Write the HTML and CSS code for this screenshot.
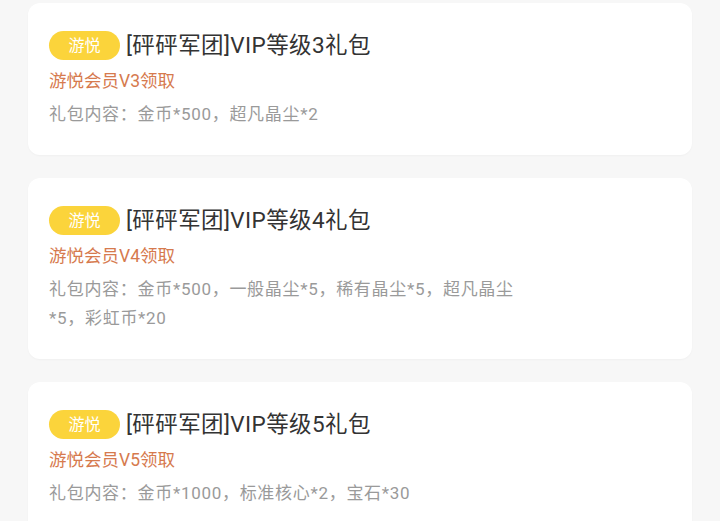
FILE: index.html
```html
<!DOCTYPE html>
<html lang="zh">
<head>
<meta charset="utf-8">
<link rel="stylesheet" href="styles.css">
</head>
<body>
<div class="list">
  <div class="card">
    <div class="title-row"><span class="badge">游悦</span><span class="title">[砰砰军团]VIP等级3礼包</span></div>
    <div class="sub">游悦会员V3领取</div>
    <div class="content">礼包内容：金币*500，超凡晶尘*2</div>
  </div>
  <div class="card">
    <div class="title-row"><span class="badge">游悦</span><span class="title">[砰砰军团]VIP等级4礼包</span></div>
    <div class="sub">游悦会员V4领取</div>
    <div class="content">礼包内容：金币*500，一般晶尘*5，稀有晶尘*5，超凡晶尘*5，彩虹币*20</div>
  </div>
  <div class="card">
    <div class="title-row"><span class="badge">游悦</span><span class="title">[砰砰军团]VIP等级5礼包</span></div>
    <div class="sub">游悦会员V5领取</div>
    <div class="content">礼包内容：金币*1000，标准核心*2，宝石*30</div>
  </div>
</div>
</body>
</html>
```

FILE: styles.css
```css
html, body {
  margin: 0;
  padding: 0;
  background: #f7f7f7;
  font-family: Roboto, "Noto Sans CJK SC", sans-serif;
  overflow: hidden;
  height: 521px;
}
.list {
  display: flex;
  flex-direction: column;
  gap: 23px;
  padding: 3px 28px 0 28px;
}
.card {
  background: #ffffff;
  border-radius: 12px;
  padding: 28px 21px 26px 21px;
  box-shadow: 0 1px 2px rgba(0,0,0,0.03);
}
.title-row {
  display: flex;
  align-items: center;
  height: 29px;
}
.badge {
  display: inline-flex;
  align-items: center;
  justify-content: center;
  width: 71px;
  height: 29px;
  border-radius: 15px;
  background: #fbd43b;
  color: #ffffff;
  font-size: 16px;
  line-height: 29px;
}
.title {
  margin-left: 6px;
  font-size: 22.5px;
  letter-spacing: 0.4px;
  color: #333333;
  line-height: 29px;
  white-space: nowrap;
}
.sub {
  margin-top: 8px;
  font-size: 17.5px;
  line-height: 26px;
  color: #d67a4e;
}
.content {
  margin-top: 6px;
  max-width: 472px;
  font-size: 17px;
  letter-spacing: 0.7px;
  line-height: 29px;
  color: #9a9a9a;
}
```
